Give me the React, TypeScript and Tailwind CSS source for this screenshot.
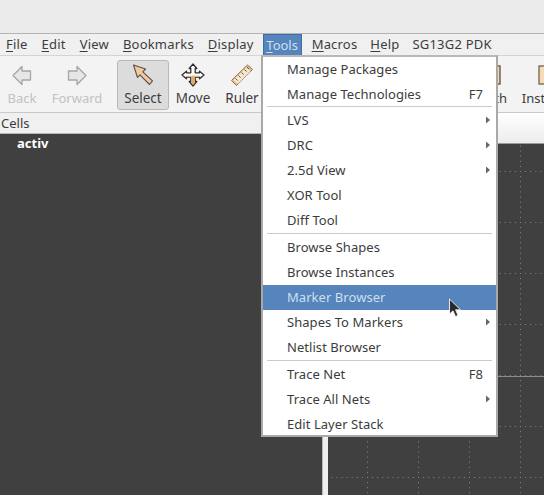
const MENUBAR = [
  { key: 'F', rest: 'ile' },
  { key: 'E', rest: 'dit' },
  { key: 'V', rest: 'iew' },
  { key: 'B', rest: 'ookmarks' },
  { key: 'D', rest: 'isplay' },
]

const MENU: { label: string; shortcut?: string; sub?: boolean; active?: boolean }[][] = [
  [{ label: 'Manage Packages' }, { label: 'Manage Technologies', shortcut: 'F7' }],
  [
    { label: 'LVS', sub: true },
    { label: 'DRC', sub: true },
    { label: '2.5d View', sub: true },
    { label: 'XOR Tool' },
    { label: 'Diff Tool' },
  ],
  [
    { label: 'Browse Shapes' },
    { label: 'Browse Instances' },
    { label: 'Marker Browser', active: true },
    { label: 'Shapes To Markers', sub: true },
    { label: 'Netlist Browser' },
  ],
  [
    { label: 'Trace Net', shortcut: 'F8' },
    { label: 'Trace All Nets', sub: true },
    { label: 'Edit Layer Stack' },
  ],
]

function BackIcon() {
  return (
    <svg width="20" height="21" viewBox="0 0 20 21">
      <path d="M1 10.5 10 1.5V6H18.5V15H10V19.5Z" fill="#e6e6e6" stroke="#a6a6a6" strokeWidth="1.3" strokeLinejoin="round" />
    </svg>
  )
}

function ForwardIcon() {
  return (
    <svg width="20" height="21" viewBox="0 0 20 21">
      <path d="M19 10.5 10 1.5V6H1.5V15H10V19.5Z" fill="#e6e6e6" stroke="#a6a6a6" strokeWidth="1.3" strokeLinejoin="round" />
    </svg>
  )
}

function SelectIcon() {
  return (
    <svg width="22" height="22" viewBox="0 0 22 22">
      <path d="M1.5 1 13.5 5 10.8 7.8 20.5 16.8 17.5 20.5 8 10.8 5.5 13.5Z" fill="#f1c9a0" stroke="#5a5148" strokeWidth="1.1" strokeLinejoin="round" />
    </svg>
  )
}

function MoveIcon() {
  return (
    <svg width="24" height="24" viewBox="0 0 24 24">
      <path d="M12 1 15.8 5.5H14.2V9.8H18.5V8.2L23 12 18.5 15.8V14.2H14.2V18.5H15.8L12 23 8.2 18.5H9.8V14.2H5.5V15.8L1 12 5.5 8.2V9.8H9.8V5.5H8.2Z" fill="#fff" stroke="#2f2f2f" strokeWidth="1.3" strokeLinejoin="round" />
      <path d="M10.5 12.5H13.5V19H14.6L12 22 9.4 19H10.5Z" fill="#f0a860" />
      <path d="M5.5 12.8H18.5V13.6H5.5Z" fill="#f5c48e" />
    </svg>
  )
}

function RulerIcon() {
  return (
    <svg width="24" height="24" viewBox="0 0 24 24">
      <path d="M1.5 17.5 17.5 2 22.5 6.5 6.5 22.5Z" fill="#efc08c" stroke="#8a6a48" strokeWidth="1" strokeLinejoin="round" />
      <path d="M3.5 17 8 21 20.5 8.5 16 4.5Z" fill="#f6f1e6" opacity="0.75" />
      <path d="M5.5 15.5 7.5 17.5M8.5 12.5 10.5 14.5M11.5 9.5 13.5 11.5M14.5 6.5 16.5 8.5M17 4 19 6" stroke="#5a5a5a" strokeWidth="1" />
    </svg>
  )
}

function PathIcon() {
  return (
    <svg width="20" height="22" viewBox="0 0 20 22">
      <rect x="2" y="2" width="15" height="18" fill="#f4d9b0" stroke="#6b5a44" strokeWidth="1.4" />
      <path d="M5 3V19M14 3V19" stroke="#7b5f3c" strokeWidth="1.4" strokeDasharray="2 2" />
    </svg>
  )
}

function InstIcon() {
  return (
    <svg width="20" height="20" viewBox="0 0 20 20">
      <rect x="1" y="1" width="18" height="18" fill="#f6dcb4" stroke="#66594a" strokeWidth="1.2" />
    </svg>
  )
}

function ToolButton({ label, icon, active, disabled, className }: {
  label: string; icon: React.ReactNode; active?: boolean; disabled?: boolean; className: string
}) {
  return (
    <div
      className={`flex flex-col items-center justify-between h-[50px] pt-px pb-[3px] shrink-0 rounded-[3px] border ${className} ${
        active ? 'bg-[#dcdcdc] border-[#b8b8b8]' : 'border-transparent'
      } ${disabled ? 'text-[#c2c2c2]' : 'text-[#3c3c3c]'}`}
    >
      <div className="h-[26px] flex items-center justify-center">{icon}</div>
      <span className="leading-[16px] whitespace-nowrap">{label}</span>
    </div>
  )
}

function MenuRow({ label, shortcut, sub, active }: { label: string; shortcut?: string; sub?: boolean; active?: boolean }) {
  return (
    <div className={`relative flex items-center h-[25px] pl-[24px] pr-[13px] tracking-[0.05px] ${active ? 'bg-[#5585bc] text-[#cfdff0]' : 'text-[#3c3c3c]'}`}>
      <span className="flex-1">{label}</span>
      {shortcut && <span>{shortcut}</span>}
      {sub && (
        <svg className="absolute right-[5px] top-[8px]" width="6" height="8" viewBox="0 0 6 8">
          <path d="M1 0.5 5 4 1 7.5Z" fill="#666" />
        </svg>
      )}
    </div>
  )
}

function Canvas() {
  return (
    <svg className="w-full h-full block" viewBox="0 0 216 351">
      <defs>
        <pattern id="gridDots" x="39" y="27" width="51" height="51" patternUnits="userSpaceOnUse">
          <path d="M0.5 0V51" stroke="#858585" strokeWidth="1" strokeDasharray="1 4.1" />
          <path d="M0 0.5H51" stroke="#858585" strokeWidth="1" strokeDasharray="1 4.1" />
        </pattern>
      </defs>
      <rect width="216" height="351" fill="#404040" />
      <rect width="216" height="351" fill="url(#gridDots)" />
      <rect x="0" y="232" width="216" height="1" fill="#8c8c8c" />
    </svg>
  )
}

export default function App() {
  return (
    <div className="relative w-[544px] h-[495px] overflow-hidden flex flex-col bg-[#f0f0f0] text-[13px] text-[#3c3c3c] font-['Noto_Sans',sans-serif]">
      {/* Window title */}
      <div className="h-[34px] shrink-0 bg-[#ebebeb] border-b border-[#b4b4b4]" />

      {/* Menu bar */}
      <div className="h-[22px] shrink-0 flex items-center pl-[6px] gap-[14px] bg-[#f0f0f0] border-b border-[#d4d4d4]">
        {MENUBAR.map(m => (
          <span key={m.key} className="tracking-[0.2px]">
            <span className="underline underline-offset-2">{m.key}</span>{m.rest}
          </span>
        ))}
        <span className="bg-[#5585bc] text-[#cfdff0] w-[39px] text-center h-[22px] leading-[21px] -ml-[5px] -mr-[4px] border border-[#3d6ea8]">
          <span className="underline underline-offset-2">T</span>ools
        </span>
        <span className="tracking-[0.2px]"><span className="underline underline-offset-2">M</span>acros</span>
        <span className="tracking-[0.2px] -ml-px"><span className="underline underline-offset-2">H</span>elp</span>
        <span className="tracking-[0.2px] -ml-px">SG13G2 PDK</span>
      </div>

      {/* Toolbar */}
      <div className="h-[57px] shrink-0 flex items-end pb-[2px] bg-[#f3f3f3] border-b border-[#c8c8c8]">
        <ToolButton className="w-[44px]" label="Back" icon={<BackIcon />} disabled />
        <ToolButton className="w-[58px] ml-[4px]" label="Forward" icon={<ForwardIcon />} disabled />
        <div className="w-px h-[38px] mb-[6px] bg-[#d8d8d8] ml-[9px]" />
        <ToolButton className="w-[52px] ml-[2px] text-[13.5px]" label="Select" icon={<SelectIcon />} active />
        <ToolButton className="w-[46px] ml-px text-[13.5px]" label="Move" icon={<MoveIcon />} />
        <ToolButton className="w-[44px] ml-[4px] text-[13.5px]" label="Ruler" icon={<RulerIcon />} />
        <div className="w-[209px] shrink-0" />
        <ToolButton className="w-[40px]" label="Path" icon={<PathIcon />} />
        <ToolButton className="w-[60px] ml-[5px]" label="Instance" icon={<InstIcon />} />
      </div>

      {/* Main */}
      <div className="flex-1 min-h-0 flex">
        <div className="w-[322px] shrink-0 flex flex-col">
          <div className="h-[21px] shrink-0 pl-px leading-[20px] bg-[#f0f0f0] border-b border-[#b8b8b8]">Cells</div>
          <div className="flex-1 bg-[#404040] text-white font-bold pl-[17px] leading-[18px]">activ</div>
        </div>
        <div className="w-[6px] shrink-0 bg-[#efefef] border-l border-[#b8b8b8]" />
        <div className="flex-1 min-w-0 flex flex-col">
          <div className="h-[31px] shrink-0 bg-gradient-to-b from-[#ffffff] to-[#ececec] border-b border-[#9a9a9a]" />
          <div className="flex-1 min-h-0">
            <Canvas />
          </div>
        </div>
      </div>

      {/* Tools menu */}
      <div className="absolute left-[261px] top-[55px] w-[237px] h-[382px] overflow-hidden bg-white border-2 border-[#a9a9a9] border-t-[#b8b8b8]">
        {MENU.map((group, i) => (
          <div key={i}>
            {i === 1 && <div className="h-px mx-[4px] -mt-px mb-px bg-[#cbcbcb]" />}
            {i > 1 && <div className="h-px mx-[4px] mb-px bg-[#cbcbcb]" />}
            {group.map(item => <MenuRow key={item.label} {...item} />)}
          </div>
        ))}
      </div>

      {/* Mouse pointer */}
      <svg className="absolute left-[448px] top-[298px]" width="14" height="20" viewBox="0 0 14 20">
        <path d="M1.5 1V16L5 12.8 7.5 18.5 10 17.4 7.6 11.8H12.5Z" fill="#2a2a2a" stroke="#e8e8e8" strokeWidth="1" strokeLinejoin="round" />
      </svg>
    </div>
  )
}
